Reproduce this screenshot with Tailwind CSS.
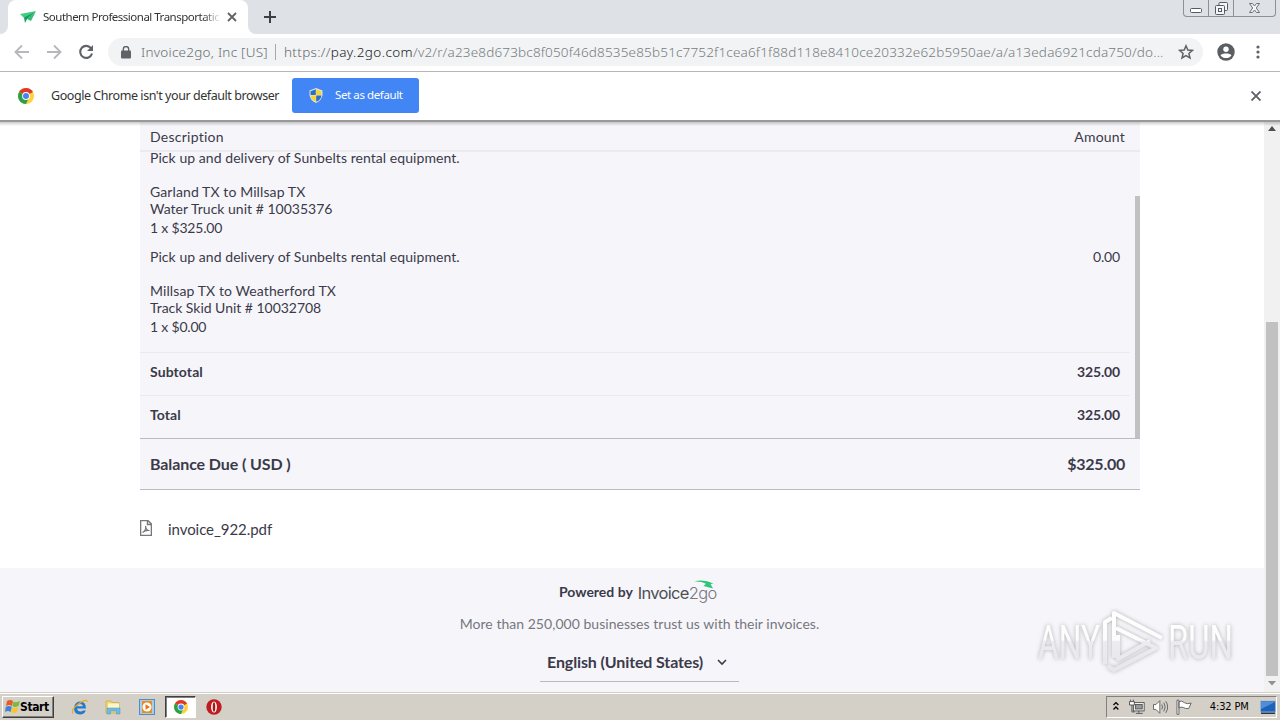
<!DOCTYPE html>
<html lang="en">
<head>
  <meta charset="UTF-8" />
  <meta name="viewport" content="width=device-width, initial-scale=1.0" />
  <title>Southern Professional Transportation</title>
  <script src="https://cdn.jsdelivr.net/npm/@tailwindcss/browser@4"></script>
</head>
<body class="w-[1280px] h-[720px] overflow-hidden flex flex-col bg-white font-['Lato',sans-serif] text-[#3b3a4a] whitespace-nowrap">

  <!-- Tab strip -->
  <header class="relative h-[34px] shrink-0 bg-[#dee1e6] flex items-end">
    <div class="w-2 h-[34px] bg-white"><div class="h-full bg-[#dee1e6] rounded-br-lg"></div></div>
    <div class="w-[240px] h-[34px] bg-white rounded-t-lg flex items-center pl-3 pr-2.5">
      <svg class="w-4 h-4 shrink-0" viewBox="0 0 16 16"><path d="M0 5 16 2 4 9Z" fill="#3ecf84"/><path d="M16 2 11 12 7 10Z" fill="#2fc077"/><path d="M16 2 4 8.500 5 14 7 10Z" fill="#159a5b"/></svg>
      <span class="ml-[7px] w-[176px] overflow-hidden text-[11.5px] tracking-[-0.5px] text-[#333] [mask-image:linear-gradient(to_right,black_160px,transparent_178px)] font-['Noto_Sans',sans-serif]">Southern Professional Transportation</span>
      <svg class="ml-[8px] w-[10px] h-[10px] shrink-0" viewBox="0 0 10 10"><path d="M1 1 9 9M9 1 1 9" stroke="#5f6368" stroke-width="1.800"/></svg>
    </div>
    <div class="w-2 h-[34px] bg-white"><div class="h-full bg-[#dee1e6] rounded-bl-lg"></div></div>
    <svg class="ml-[8px] mb-[11px] w-3 h-3" viewBox="0 0 12 12"><path d="M6 0V12M0 6H12" stroke="#3c4043" stroke-width="2"/></svg>
    <div class="absolute right-[4px] top-0 w-[93px] h-[17px] border border-t-0 border-[#8b909a] rounded-b flex">
      <div class="w-[25px] border-r border-[#8b909a] flex justify-center pt-[8px]"><svg class="w-[12px] h-[5px]" viewBox="0 0 12 5"><rect x=".5" y=".5" width="11" height="4" rx="1" fill="#fff" stroke="#555b66"/></svg></div>
      <div class="w-[25px] border-r border-[#8b909a] flex justify-center pt-[2px]"><svg class="w-[13px] h-[13px]" viewBox="0 0 13 13" fill="#f4f5f7" stroke="#555b66"><rect x="4" y=".5" width="8.500" height="8" rx="1"/><rect x=".5" y="3.500" width="9" height="9" rx="1"/><rect x="3.500" y="6.500" width="3" height="3"/></svg></div>
      <div class="flex-1 flex justify-center pt-[3px]"><svg class="w-[11px] h-[10px]" viewBox="0 0 11 10"><path d="M.5.5H3.500L5.500 3 7.500.5H10.500L7.300 5 10.500 9.500H7.500L5.500 7 3.500 9.500H.5L3.700 5Z" fill="#f4f5f7" stroke="#6b717c"/></svg></div>
    </div>
  </header>

  <!-- Toolbar -->
  <div class="h-[38px] shrink-0 border-b border-[#b4b6b9] flex items-center pb-px pl-[14px]">
    <svg class="w-4 h-4" viewBox="0 0 16 16" fill="none" stroke="#b6b8bb" stroke-width="1.900"><path d="M15 8H2M8 1.500 1.500 8 8 14.500"/></svg>
    <svg class="ml-[16px] w-4 h-4" viewBox="0 0 16 16" fill="none" stroke="#b6b8bb" stroke-width="1.900"><path d="M1 8H14M8 1.500 14.500 8 8 14.500"/></svg>
    <svg class="ml-[16px] w-4 h-4" viewBox="0 0 16 16"><path d="M13.200 4.500A6 6 0 1 0 14 9.500" fill="none" stroke="#5f6368" stroke-width="2.100"/><path d="M15 1V7H9Z" fill="#5f6368"/></svg>
    <div class="ml-[14px] w-[1095px] h-[28px] rounded-full bg-[#f1f3f4] flex items-center text-[13.5px] text-[#777c81] font-['Noto_Sans',sans-serif] font-light">
      <svg class="ml-[13px] w-[10px] h-[13px] shrink-0" viewBox="0 0 10 13"><rect y="4.500" width="10" height="8" rx="1" fill="#5f6368"/><path d="M2.300 5V3.200a2.700 2.700 0 0 1 5.400 0V5" fill="none" stroke="#5f6368" stroke-width="1.400"/></svg>
      <span class="ml-[10px] w-[127px] tracking-[0.25px] text-[#6a6e73]">Invoice2go, Inc [US]</span>
      <span class="ml-[7px] w-px h-4 bg-[#a5a9ad]"></span>
      <span class="ml-[8px] w-[881px] tracking-[0.17px]"><span class="text-[#65696e] tracking-[0.3px]">https://</span><span class="text-[#202124] tracking-[0.4px]">pay.2go.com</span>/v2/r/a23e8d673bc8f050f46d8535e85b51c7752f1cea6f1f88d118e8410ce20332e62b5950ae/a/a13eda6921cda750/do...</span>
      <svg class="ml-[13px] w-4 h-4 shrink-0" viewBox="0 0 16 16"><path d="M8 1.800 9.800 6 14.400 6.400 10.900 9.400 12 13.900 8 11.500 4 13.900 5.100 9.400 1.600 6.400 6.200 6Z" fill="none" stroke="#5f6368" stroke-width="1.500"/></svg>
    </div>
    <svg class="ml-[14px] w-[18px] h-[18px]" viewBox="0 0 18 18"><circle cx="9" cy="9" r="8.700" fill="#5a5e63"/><circle cx="9" cy="6.200" r="2.700" fill="#fff"/><path d="M3.500 12.200C5 9.800 13 9.800 14.500 12.200 12 16 6 16 3.500 12.200Z" fill="#fff"/></svg>
    <svg class="ml-[21px] w-[4px] h-[14px]" viewBox="0 0 4 14" fill="#5f6368"><circle cx="2" cy="2" r="1.600"/><circle cx="2" cy="7" r="1.600"/><circle cx="2" cy="12" r="1.600"/></svg>
  </div>

  <!-- Default browser bar -->
  <div class="h-[48px] shrink-0 flex items-center pl-[18px] pr-[19px] font-['Noto_Sans',sans-serif]">
    <svg class="w-4 h-4" viewBox="0 0 16 16"><circle cx="8" cy="8" r="8" fill="#fdd23c"/><path d="M8 8 1.100 4A8 8 0 0 1 14.900 4Z" fill="#e0392b"/><path d="M8 8 1.100 4A8 8 0 0 0 8 16L11 9.500Z" fill="#28a14b"/><path d="M8 4H15Q11 3 8 4Z" fill="#e0392b"/><circle cx="8" cy="8" r="3.900" fill="#fff"/><circle cx="8" cy="8" r="3" fill="#4a83ee"/></svg>
    <span class="ml-[17px] w-[229px] text-[12.5px] tracking-[-0.44px] text-[#333]">Google Chrome isn't your default browser</span>
    <button class="ml-[12px] -mt-[2px] w-[127px] h-[35px] rounded-[3px] bg-[#4285f4] text-white text-[11.5px] flex items-center pl-[17px]">
      <svg class="w-[14px] h-[15px]" viewBox="0 0 14 15"><path d="M7 0 13.500 2.500V7Q13 12 7 15 1 12 .5 7V2.500Z" fill="#dfe6ef"/><path d="M6.800 1.200V7H1.500V3.200Z" fill="#2f6fbe"/><path d="M7.200 1.200 12.500 3.200V7H7.200Z" fill="#f8d52e"/><path d="M1.500 7.400H6.800V13.800Q2 11.500 1.500 7.400Z" fill="#f8d52e"/><path d="M12.500 7.400H7.200V13.800Q12 11.500 12.500 7.400Z" fill="#2f6fbe"/></svg>
      <span class="ml-[12px] tracking-[-0.4px]">Set as default</span>
    </button>
    <svg class="ml-auto w-[10px] h-[10px]" viewBox="0 0 10 10"><path d="M.5.5 9.500 9.500M9.500.5.500 9.500" stroke="#5f6368" stroke-width="1.900"/></svg>
  </div>

  <!-- Page viewport -->
  <div class="relative h-[572px] shrink-0 flex border-t-2 border-[#999]">
    <div class="absolute inset-x-0 top-0 h-[4px] bg-linear-to-b from-black/20 to-transparent"></div>
    <main class="w-[1264px] flex flex-col">
      <section class="ml-[140px] w-[1000px] bg-[#f6f6fa] text-[14px]">
        <div class="h-[30px] border-b-2 border-[#ebebef] flex justify-between items-center pl-[10px] pr-[15px] pt-px"><span class="tracking-[0.25px]">Description</span><span class="tracking-[0.2px]">Amount</span></div>
        <div class="flex h-[286px]">
          <div class="w-[990px] flex flex-col">
            <div class="h-[98px] pl-[10px] pr-[10px] -mt-[3px] leading-[17px] tracking-[0.06px]">
              <p>Pick up and delivery of Sunbelts rental equipment.</p>
              <p class="mt-[17px] tracking-[0.1px]">Garland TX to Millsap TX</p>
              <p class="tracking-[0.01px]">Water Truck unit # 10035376</p>
              <p class="mt-[2px] tracking-[-0.2px]">1 x $325.00</p>
            </div>
            <div class="h-[104px] mt-px pl-[10px] pr-[10px] flex justify-between leading-[17px] tracking-[0.06px]">
              <div>
                <p>Pick up and delivery of Sunbelts rental equipment.</p>
                <p class="mt-[17px] tracking-[0.1px]">Millsap TX to Weatherford TX</p>
                <p class="tracking-[-0.03px]">Track Skid Unit # 10032708</p>
                <p class="mt-[2px] tracking-[-0.2px]">1 x $0.00</p>
              </div>
              <span class="tracking-[-0.15px]">0.00</span>
            </div>
            <div class="h-[43px] border-t border-[#eaeaef] flex justify-between items-center px-[10px] pb-[6px] font-bold"><span class="tracking-[0.1px]">Subtotal</span><span class="tracking-[-0.15px]">325.00</span></div>
            <div class="h-[43px] border-t border-[#eaeaef] flex justify-between items-center px-[10px] pb-[6px] font-bold"><span class="tracking-[0.1px]">Total</span><span class="tracking-[-0.15px]">325.00</span></div>
          </div>
          <div class="ml-[5px] mt-[44px] w-[5px] bg-[#c1c1c1]"></div>
        </div>
        <div class="h-[52px] border-y border-[#bcbcc0] flex justify-between items-center pl-[10px] pr-[15px] text-[16px] font-bold"><span class="tracking-[-0.1px]">Balance Due ( USD )</span><span class="tracking-[-0.25px]">$325.00</span></div>
      </section>

      <div class="ml-[140px] h-[78px] flex items-center text-[15px]">
        <svg class="w-[12px] h-4 -mt-[2px]" viewBox="0 0 12 16" fill="none" stroke="#77777d" stroke-width="1.400"><path d="M.6.6H8L11.400 4V15.400H.6ZM7.500.6V4.500H11.400"/><path d="M2.500 12.500C5 11 6 8 5.500 6 6 9 7.500 10.500 9.500 10.500 7 10 4.500 10.800 2.500 12.500" stroke-width="1.200"/></svg>
        <span class="ml-[16px] tracking-[-0.06px]">invoice_922.pdf</span>
      </div>

      <footer class="h-[124px] bg-[#f6f6fa] flex flex-col items-center pl-[15px]">
        <div class="mt-[10px] h-[27px] w-[161px] flex items-center">
          <span class="text-[14px] font-bold">Powered by</span>
          <span class="relative ml-[5px] mt-[4px] h-[21px] leading-[20px] text-[16.5px] tracking-[-0.7px] text-[#4e4e55] font-['Inter',sans-serif]">Invoice<span class="font-light text-[#77777d]">2go</span>
            <svg class="absolute left-[56px] top-[-3px] w-[20px] h-[9px]" viewBox="0 0 20 9"><path d="M0 1.500Q9-1.500 19.500 3.500L16.500 4 19 8.500 9.500 6 12 3.800Q7 1 0 1.500Z" fill="#2dc678"/></svg>
          </span>
        </div>
        <p class="mt-[10px] text-[14px] leading-[17px] tracking-[0.03px] text-[#77777f]">More than 250,000 businesses trust us with their invoices.</p>
        <div class="mt-[10px] w-[199px] h-[40px] border-b border-[#b9b9bf] flex items-center pl-[7px] text-[16px] font-bold">
          <span class="tracking-[-0.12px]">English (United States)</span>
          <svg class="ml-[14px] mt-[2px] w-[10px] h-[7px]" viewBox="0 0 10 7"><path d="M1 1 5 5 9 1" fill="none" stroke="#3b3a4a" stroke-width="1.600"/></svg>
        </div>
      </footer>
    </main>

    <!-- Page scrollbar -->
    <div class="w-4 bg-[#f1f1f1] flex flex-col items-center">
      <svg class="mt-[4px] w-[8px] h-[5px] shrink-0" viewBox="0 0 8 5"><path d="M0 5 4 0 8 5Z" fill="#505050"/></svg>
      <div class="mt-[191px] w-[12px] h-[354px] bg-[#c1c1c1] shrink-0"></div>
      <svg class="mt-[5px] w-[8px] h-[5px] shrink-0" viewBox="0 0 8 5"><path d="M0 0 4 4.500 8 0Z" fill="#909090"/></svg>
    </div>

    <!-- Watermark -->
    <svg class="absolute left-[1030px] top-[480px] w-[210px] h-[80px] overflow-visible drop-shadow-[0_0_2px_rgba(0,0,0,0.28)]" viewBox="0 0 210 80" fill="none" stroke-width="4">
      <defs><linearGradient id="fade" gradientUnits="userSpaceOnUse" x1="0" y1="10" x2="0" y2="66"><stop offset="0" stop-color="#fff"/><stop offset=".5" stop-color="#fcfcfd"/><stop offset=".53" stop-color="#ececf0"/><stop offset="1" stop-color="#e8e8ec"/></linearGradient></defs>
      <g stroke="url(#fade)" stroke-linejoin="round">
        <path d="M75 62V20L82 16M84 56V11L132 36M86 26 126 46 84 68 78 64M88 33V57L120 39"/>
      </g>
      <g fill="url(#fade)" stroke="none" font-family="Roboto, sans-serif" font-size="49">
        <text x="8" y="57" textLength="62" lengthAdjust="spacingAndGlyphs">ANY</text>
        <text x="138" y="57" textLength="65" lengthAdjust="spacingAndGlyphs">RUN</text>
      </g>
    </svg>
  </div>

  <!-- Taskbar -->
  <footer class="h-[28px] shrink-0 bg-[#d4d0c8] border-t border-[#d4d0c8] shadow-[inset_0_1px_0_#fff] flex items-center font-['DejaVu_Sans_Condensed','DejaVu_Sans',sans-serif] text-black">
    <div class="ml-[2px] w-[52px] h-[22px] border border-t-white border-l-white border-r-[#404040] border-b-[#404040] shadow-[inset_-1px_-1px_0_#808080] flex items-center pl-[2px]">
      <svg class="w-[15px] h-[15px]" viewBox="0 0 15 15"><path d="M2 2Q5 0 8 2L7 7Q4 5 1 7Z" fill="#e85a28"/><path d="M8.500 2.500Q11 4 15 2L13.500 7Q10 9 7.500 7.300Z" fill="#7db93c"/><path d="M.8 8Q4 6 6.800 8L5.500 13Q3 11 0 13Z" fill="#3d82d8"/><path d="M7.300 8.300Q10 10 13.200 8.300L12 13Q9 15 6 13.300Z" fill="#f8c52c"/></svg>
      <span class="text-[12px] font-bold tracking-[-0.4px]">Start</span>
    </div>
    <svg class="ml-[18px] w-4 h-4" viewBox="0 0 16 16"><path d="M14 9.500H5Q5.500 12.500 8.500 12.500 10.500 12.500 11 11.500H13.800Q12.500 15.500 8 15.500 2 15.500 2 9 2.500 3 8 2.500 14 2.500 14 9.500M5 7.200H11Q10.500 5 8 5 5.500 5 5 7.200" fill="#2479cc" fill-rule="evenodd"/><path d="M1 14.500Q-2 11 7 4.500 15-1 15 3" fill="none" stroke="#e5ae26" stroke-width="1.300"/></svg>
    <svg class="ml-[17px] w-4 h-4" viewBox="0 0 16 16"><path d="M1 2H6L7 3.500H14V14H1Z" fill="#f0d676" stroke="#c9a742" stroke-width=".7"/><path d="M3 4.500H14V9H3Z" fill="#fff6c7"/><path d="M2 9H15V15H11.500V12H5.500V15H2Z" fill="#72b9e2" stroke="#4a94c4" stroke-width=".5"/></svg>
    <svg class="ml-[18px] w-4 h-4" viewBox="0 0 16 16"><rect x=".5" y=".5" width="15" height="15" fill="#a7cdea" stroke="#4b8fc6"/><rect x="3" y="2" width="10" height="12" fill="#f08a1d"/><circle cx="8" cy="8" r="4.500" fill="#fff"/><path d="M6.500 5.200V10.800L11 8Z" fill="#e87512"/></svg>
    <div class="ml-[10px] w-[31px] h-[22px] bg-white border border-t-[#404040] border-l-[#404040] border-r-white border-b-white shadow-[inset_1px_1px_0_#808080] flex items-center justify-center">
      <svg class="w-[14px] h-[14px]" viewBox="0 0 16 16"><circle cx="8" cy="8" r="8" fill="#fdd23c"/><path d="M8 8 1.100 4A8 8 0 0 1 14.900 4Z" fill="#e0392b"/><path d="M8 8 1.100 4A8 8 0 0 0 8 16L11 9.500Z" fill="#28a14b"/><circle cx="8" cy="8" r="3.900" fill="#fff"/><circle cx="8" cy="8" r="3" fill="#4a83ee"/></svg>
    </div>
    <svg class="ml-[10px] w-4 h-4" viewBox="0 0 16 16"><circle cx="8" cy="8" r="7.700" fill="#bd1d20"/><ellipse cx="8" cy="8" rx="2.900" ry="5.600" fill="#fff"/><ellipse cx="8" cy="8" rx="1.300" ry="4.800" fill="#a3171a"/></svg>
    <div class="ml-auto mr-[3px] w-[171px] h-[22px] border border-t-[#808080] border-l-[#808080] border-r-white border-b-white flex items-center pl-[6px]">
      <svg class="-mt-px w-[6px] h-[10px]" viewBox="0 0 6 10" fill="none" stroke="#000" stroke-width="1.300"><path d="M.5 4 3 1.500 5.500 4M.5 8.500 3 6 5.500 8.500"/></svg>
      <svg class="ml-[10px] w-4 h-4" viewBox="0 0 16 16" stroke="#555" fill="#fff"><rect x="4.500" y="3.500" width="11" height="8.500"/><rect x="6.500" y="5.500" width="7" height="4.500" fill="#999"/><path d="M7 14.500H14M10 12V14M3 6V13H6" fill="none"/><path d="M.5 2.500H5.500V6H.5ZM1.500.5V2.500M4.500.5V2.500"/></svg>
      <svg class="ml-[8px] w-4 h-4" viewBox="0 0 16 16" stroke="#666" fill="#fff"><path d="M.5 5.500H3L7 1.500V14.500L3 10.500H.5Z"/><path d="M9 5.500Q10.500 8 9 10.500M11 3.500Q14 8 11 12.500M13 2Q17 8 13 14" fill="none"/></svg>
      <svg class="ml-[8px] w-4 h-4" viewBox="0 0 16 16" stroke="#666" fill="#fff"><path d="M1 1H3V15.500H1ZM3 2.500Q6 1 8.500 3.500 11 5.500 15.500 4L13 9.500Q9 10 7.500 8.500 5.500 7.500 3 9Z"/></svg>
      <span class="ml-[18px] mt-[2px] w-[41px] text-[11px] tracking-[-0.15px]">4:32 PM</span>
      <svg class="ml-[10px] w-4 h-4 shrink-0" viewBox="0 0 16 16"><rect x=".5" y="2" width="15" height="11" fill="#1d62b8" stroke="#9fb9d6" stroke-width=".8"/><path d="M1 3H15L1 10Z" fill="#508fd8"/><path d="M1 13.500H15V15H1Z" fill="#24364e"/></svg>
    </div>
  </footer>
</body>
</html>
